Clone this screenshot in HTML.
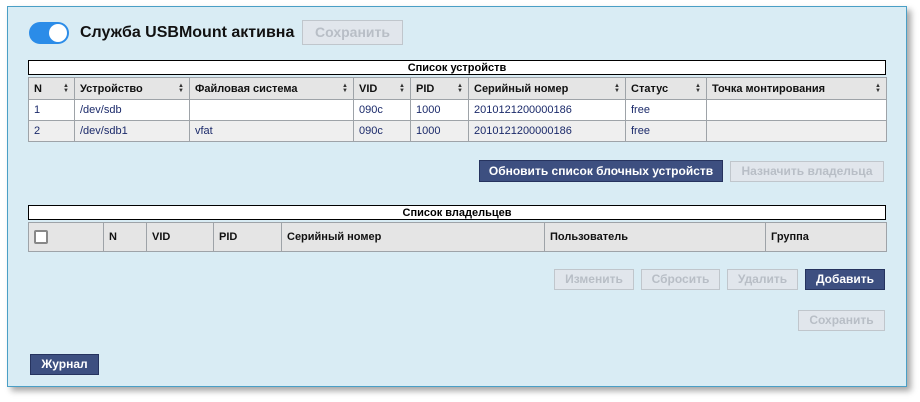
<!DOCTYPE html>
<html><head><meta charset="utf-8"><style>
*{box-sizing:border-box;margin:0;padding:0}
body{width:920px;height:402px;background:#fff;font-family:"Liberation Sans",sans-serif;position:relative;overflow:hidden}
.panel{position:absolute;left:7px;top:6px;width:900px;height:381px;background:#d9ecf4;border:1px solid #4a9fc6;box-shadow:4px 4px 6px rgba(0,0,0,.35)}
.a{position:absolute}
.btn{position:absolute;font-size:12px;font-weight:bold;text-align:center;border:1px solid #c0c6cc;background:#e1e6ec;color:#b8bec6}
.btn.p{background:#3d4f80;border-color:#26335e;color:#fff}
.title{position:absolute;background:#fff;border:1px solid #000;font-size:11px;font-weight:bold;text-align:center;line-height:14px}
table{position:absolute;border-collapse:collapse;font-size:11px;table-layout:fixed}
td,th{border:1px solid #9ea3a8;padding:0 5px;text-align:left;white-space:nowrap;overflow:hidden}
th{background:#e5e5e5;font-weight:bold;color:#111}
td{color:#1b2a6a}
tr.w td{background:#fff}tr.g td{background:#efefef}
.s{float:right;display:inline-flex;flex-direction:column;font-size:6px;line-height:5px;color:#333;margin-top:1px}
</style></head><body>
<div class="panel"></div>
<div class="a" style="left:29px;top:22px;width:40px;height:22px;border-radius:11px;background:#2b8ce8"></div>
<div class="a" style="left:49px;top:24px;width:18px;height:18px;border-radius:9px;background:#fff"></div>
<div class="a" style="left:80px;top:24px;font-size:16px;font-weight:bold;color:#111">Служба USBMount активна</div>
<div class="btn" style="left:302px;top:20px;width:101px;height:25px;line-height:23px;font-size:14px">Сохранить</div>

<div class="title" style="left:28px;top:60px;width:858px;height:15px">Список устройств</div>
<table style="left:28px;top:77px;width:858px">
<colgroup><col style="width:46px"><col style="width:115px"><col style="width:164px"><col style="width:57px"><col style="width:58px"><col style="width:157px"><col style="width:81px"><col style="width:180px"></colgroup>
<tr style="height:22px"><th>N<span class="s"><b>▲</b><b>▼</b></span></th><th>Устройство<span class="s"><b>▲</b><b>▼</b></span></th><th>Файловая система<span class="s"><b>▲</b><b>▼</b></span></th><th>VID<span class="s"><b>▲</b><b>▼</b></span></th><th>PID<span class="s"><b>▲</b><b>▼</b></span></th><th>Серийный номер<span class="s"><b>▲</b><b>▼</b></span></th><th>Статус<span class="s"><b>▲</b><b>▼</b></span></th><th>Точка монтирования<span class="s"><b>▲</b><b>▼</b></span></th></tr>
<tr class="w" style="height:21px"><td>1</td><td>/dev/sdb</td><td></td><td>090c</td><td>1000</td><td>2010121200000186</td><td>free</td><td></td></tr>
<tr class="g" style="height:21px"><td>2</td><td>/dev/sdb1</td><td>vfat</td><td>090c</td><td>1000</td><td>2010121200000186</td><td>free</td><td></td></tr>
</table>
<div class="btn p" style="left:479px;top:160px;width:244px;height:22px;line-height:20px">Обновить список блочных устройств</div>
<div class="btn" style="left:730px;top:161px;width:154px;height:21px;line-height:19px">Назначить владельца</div>

<div class="title" style="left:28px;top:205px;width:858px;height:15px">Список владельцев</div>
<table style="left:28px;top:222px;width:858px">
<colgroup><col style="width:75px"><col style="width:43px"><col style="width:67px"><col style="width:68px"><col style="width:263px"><col style="width:221px"><col style="width:121px"></colgroup>
<tr style="height:29px"><th><span style="display:inline-block;width:14px;height:14px;border:2px solid #888;border-radius:2px;background:#fff;vertical-align:middle"></span></th><th>N</th><th>VID</th><th>PID</th><th>Серийный номер</th><th>Пользователь</th><th>Группа</th></tr>
</table>
<div class="btn" style="left:554px;top:269px;width:80px;height:21px;line-height:19px">Изменить</div>
<div class="btn" style="left:641px;top:269px;width:79px;height:21px;line-height:19px">Сбросить</div>
<div class="btn" style="left:727px;top:269px;width:71px;height:21px;line-height:19px">Удалить</div>
<div class="btn p" style="left:805px;top:269px;width:80px;height:21px;line-height:19px">Добавить</div>
<div class="btn" style="left:798px;top:310px;width:87px;height:21px;line-height:19px">Сохранить</div>
<div class="btn p" style="left:30px;top:354px;width:69px;height:21px;line-height:19px">Журнал</div>
</body></html>
